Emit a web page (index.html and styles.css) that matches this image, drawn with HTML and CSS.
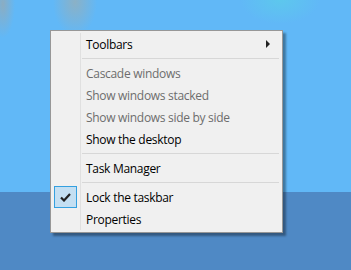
FILE: index.html
```html
<!DOCTYPE html>
<html>

<head>
	<meta charset="UTF-8">
	<title>Taskbar menu</title>
	<link rel="stylesheet" href="styles.css">
</head>

<body>
	<div class="desktop">
		<div class="wallpaper"></div>
		<div class="taskbar"></div>

		<div class="menu">
			<div class="item">
				<span class="label">Toolbars</span>
				<span class="arrow"></span>
			</div>
			<div class="sep"></div>
			<div class="item disabled"><span class="label">Cascade windows</span></div>
			<div class="item disabled"><span class="label">Show windows stacked</span></div>
			<div class="item disabled"><span class="label">Show windows side by side</span></div>
			<div class="item"><span class="label">Show the desktop</span></div>
			<div class="sep"></div>
			<div class="item"><span class="label">Task Manager</span></div>
			<div class="sep"></div>
			<div class="item checked">
				<span class="check">
					<svg width="11" height="9" viewBox="0 0 11 9">
						<path d="M1 4.5 L4 7.5 L10 1" fill="none" stroke="#222" stroke-width="2.2" />
					</svg>
				</span>
				<span class="label">Lock the taskbar</span>
			</div>
			<div class="item"><span class="label">Properties</span></div>
		</div>
	</div>
</body>

</html>
```

FILE: styles.css
```css
body,
html {
	margin: 0;
	padding: 0;
	overflow: hidden;
	font-family: 'Open Sans', 'Noto Sans', sans-serif;
}

* {
	box-sizing: border-box;
}

.desktop {
	position: relative;
	width: 351px;
	height: 270px;
	display: flex;
	flex-direction: column;
}

.wallpaper {
	height: 192px;
	flex: none;
	background:
		radial-gradient(ellipse 12px 34px at 3px 4px, rgba(150, 170, 180, .8), transparent),
		radial-gradient(ellipse 22px 34px at 75px 2px, rgba(150, 175, 185, .8), transparent),
		radial-gradient(ellipse 40px 24px at 280px 0px, rgba(90, 210, 230, .6), transparent),
		#61b8f7;
}

.taskbar {
	flex-grow: 1;
	background: #4f89c5;
}

.menu {
	position: absolute;
	left: 50px;
	top: 30px;
	width: 233px;
	height: 203px;
	padding: 2px 3px 2px 2px;
	background: #f0f0f0;
	border: 1px solid #979797;
	box-shadow: 3px 3px 2px rgba(0, 0, 0, .35);
	display: flex;
	flex-direction: column;
}

.menu:before {
	content: "";
	position: absolute;
	left: 29px;
	top: 2px;
	bottom: 2px;
	width: 1px;
	background: #e0e0e0;
}

.menu .item {
	height: 22px;
	flex: none;
	display: flex;
	align-items: center;
	position: relative;
	font-size: 12px;
	letter-spacing: -0.3px;
	color: #000;
}

.menu .item .label {
	margin-left: 33px;
	flex-grow: 1;
}

.menu .item.disabled {
	color: #6d6d6d;
}

.menu .sep {
	height: 7px;
	flex: none;
	display: flex;
	align-items: center;
	padding-left: 29px;
	padding-right: 0;
}

.menu .sep:after {
	content: "";
	display: block;
	height: 1px;
	width: 100%;
	background: #d7d7d7;
}

.menu .arrow {
	width: 0;
	height: 0;
	border-top: 4px solid transparent;
	border-bottom: 4px solid transparent;
	border-left: 4px solid #222;
	margin-right: 9px;
}

.menu .check {
	position: absolute;
	left: 1px;
	top: 0;
	width: 23px;
	height: 22px;
	background: #c4dff2;
	border: 1px solid #34a0e0;
	display: flex;
	justify-content: center;
	align-items: center;
}
```
